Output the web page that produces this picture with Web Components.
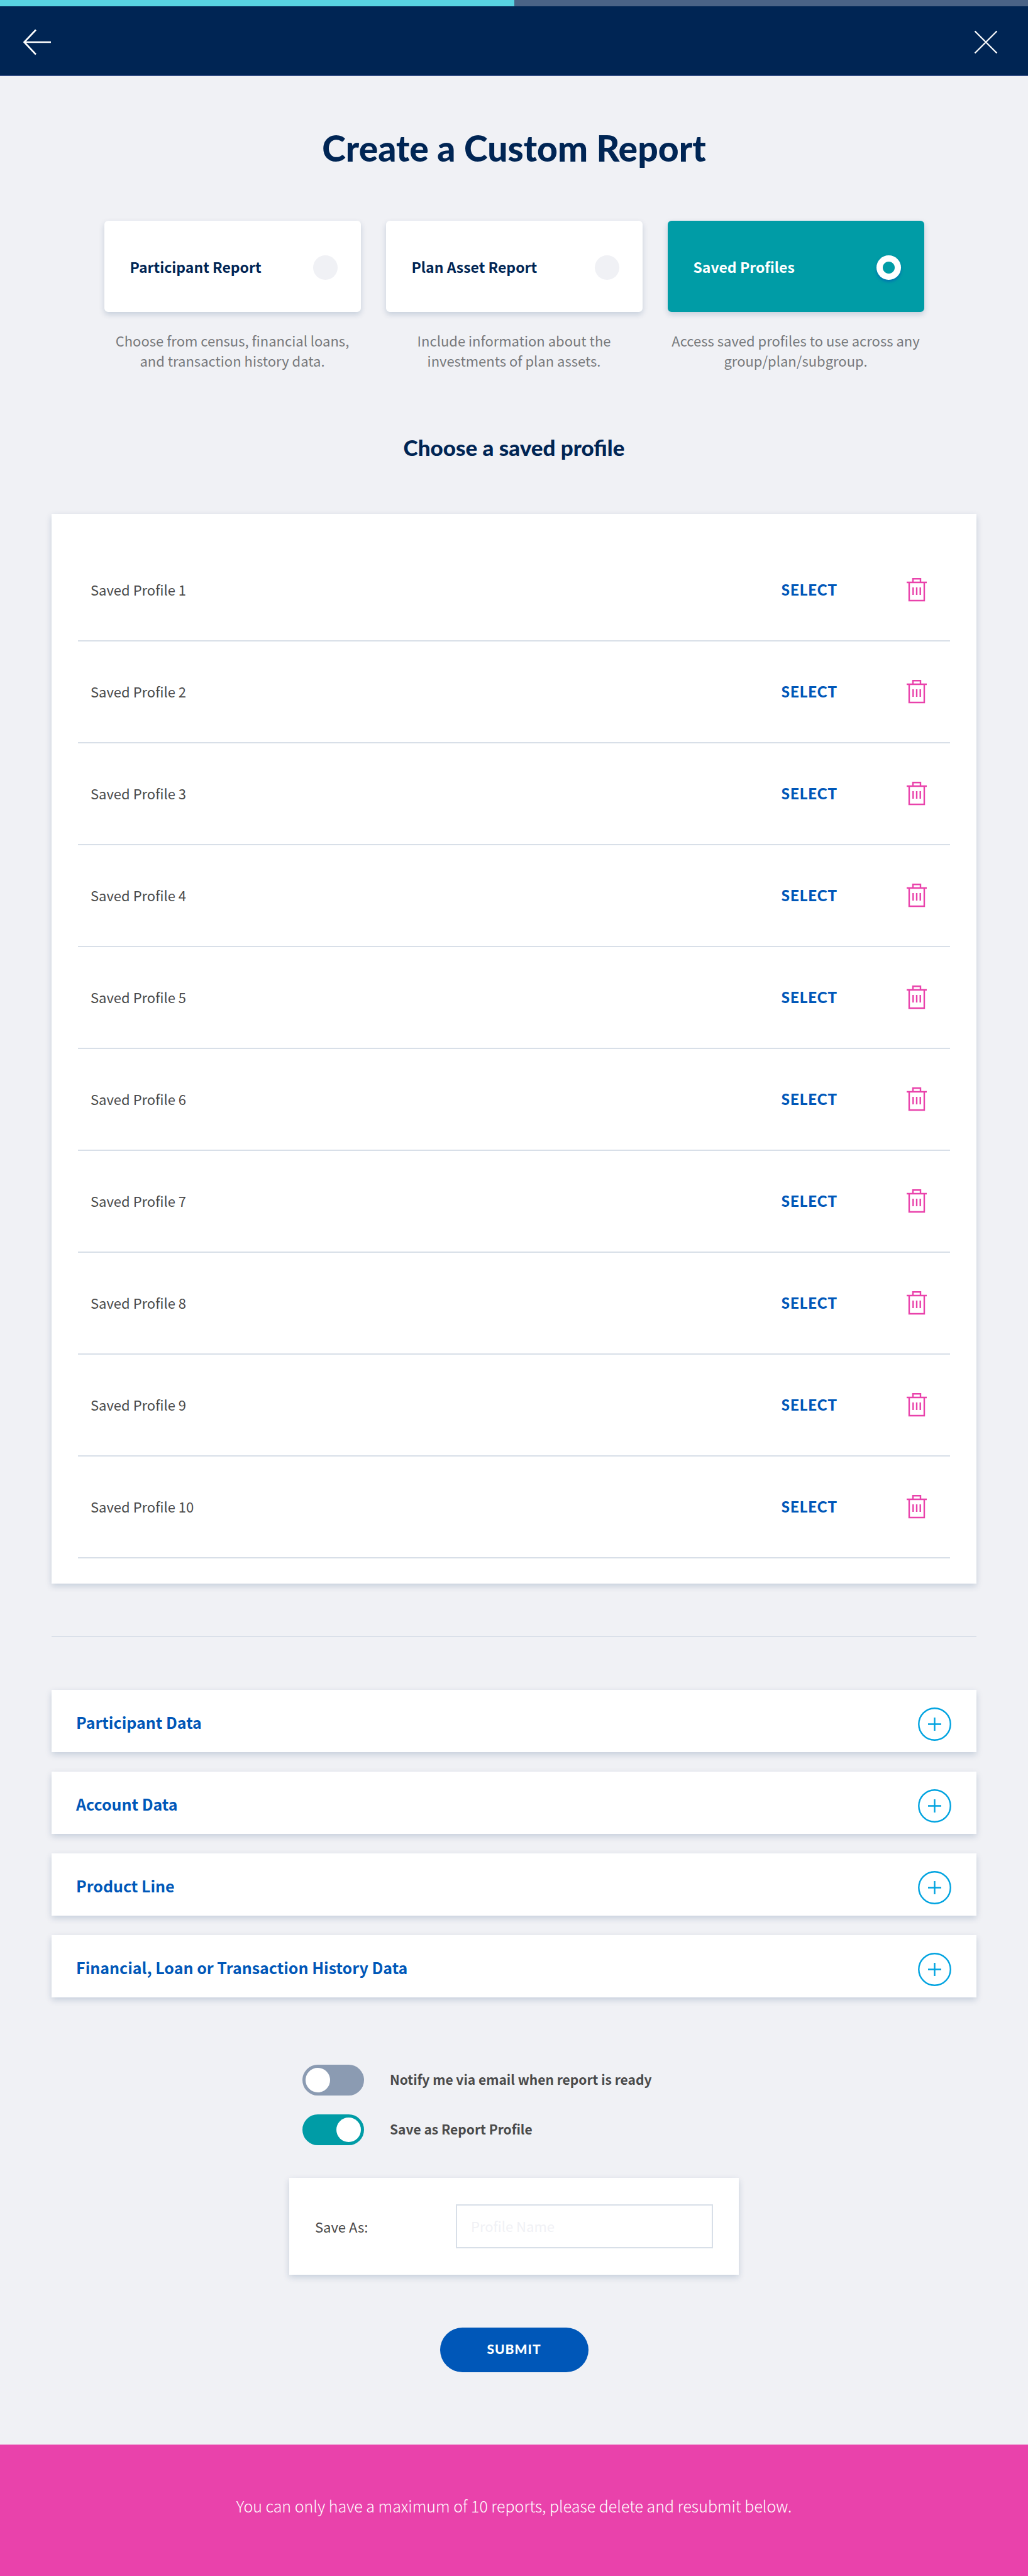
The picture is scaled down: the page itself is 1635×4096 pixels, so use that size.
<!DOCTYPE html>
<html lang="en">
<head>
<meta charset="utf-8">
<title>Create a Custom Report</title>
<style>
  :root {
    --navy: #002554;
    --blue: #0057b8;
    --sky: #00a3e0;
    --teal: #009ca6;
    --pink: #e942ab;
    --ground: #f0f1f5;
    --rule: #d8dfe8;
    --ink: #4a4a4a;
    --muted: #77797c;
    --shadow: 0 4px 10px rgba(0, 48, 98, .18);
    --body: "Noto Sans CJK SC", "Noto Sans", sans-serif;
    --display: Lato, "Liberation Sans", sans-serif;
  }
  body { margin: 0; background: var(--ground); color: var(--ink); font-family: var(--body); font-size: 22px; }
</style>
</head>
<body>
<report-page></report-page>

<script>
const define = (name, html, setup) => {
  const template = document.createElement('template');
  template.innerHTML = html;
  customElements.define(name, class extends HTMLElement {
    constructor() {
      super();
      this.attachShadow({ mode: 'open' }).append(template.content.cloneNode(true));
    }
    connectedCallback() { if (setup) setup(this, this.shadowRoot); }
  });
};

define('top-bar', `
<style>
  :host { display: block; background: var(--navy); }
  progress { display: block; width: 100%; height: 10px; border: 0; appearance: none; background: #4a6386; }
  progress::-webkit-progress-bar { background: #4a6386; }
  progress::-webkit-progress-value { background: #58d3e2; }
  nav { display: flex; justify-content: space-between; align-items: center; height: 111px; padding: 5px 48px 0 36px; border-bottom: 2px solid #304a80; box-sizing: border-box; }
  button { display: block; padding: 0; border: 0; background: none; cursor: pointer; }
  svg { display: block; fill: none; stroke: #fff; }
</style>
<progress value="1" max="2" aria-label="Progress"></progress>
<nav>
  <button aria-label="Back"><svg width="46" height="42" viewBox="0 0 46 42" stroke-width="2.6"><path d="M21 1.5 2.5 21 21 40.5M2.5 21H45"/></svg></button>
  <button aria-label="Close"><svg width="38" height="38" viewBox="0 0 38 38" stroke-width="2.2"><path d="M1.5 1.5 36.5 36.5M36.5 1.5 1.5 36.5"/></svg></button>
</nav>`);

define('report-option', `
<style>
  :host { display: block; flex: 1; }
  label { display: flex; align-items: center; justify-content: space-between; height: 145px; padding: 0 37px 0 41px; box-sizing: border-box; border-radius: 6px; background: #fff; color: var(--navy); box-shadow: var(--shadow); font-size: 23px; font-weight: 600; cursor: pointer; }
  label:has(:checked) { background: var(--teal); color: #fff; }
  input { appearance: none; width: 39px; height: 39px; margin: 4px 0 0; border-radius: 50%; background: var(--ground); }
  input:checked { background: radial-gradient(circle, var(--teal) 9px, #fff 10px); box-shadow: 0 3px 4px rgba(0, 87, 184, .6); }
  p { margin: 29px 0 0; text-align: center; color: var(--muted); line-height: 32px; }
</style>
<label><span></span><input type="radio" name="report"></label>
<p><slot></slot></p>`, (el, root) => {
  const radio = root.querySelector('input');
  root.querySelector('span').textContent = el.getAttribute('label');
  radio.checked = el.hasAttribute('checked');
  el.uncheck = () => { radio.checked = false; };
  radio.addEventListener('change', () => {
    for (const other of el.parentNode.children) if (other !== el) other.uncheck();
  });
});

define('profile-row', `
<style>
  :host { display: flex; align-items: center; height: 162px; padding: 0 37px 0 20px; box-sizing: border-box; border-bottom: 2px solid var(--rule); }
  span { flex: 1; padding-bottom: 3px; }
  button { padding: 0; border: 0; background: none; cursor: pointer; }
  .select { margin-right: 110px; color: var(--blue); font: 900 24px/32px var(--display); letter-spacing: 1px; }
  svg { display: block; fill: none; stroke: var(--pink); stroke-width: 2.4; }
</style>
<span><slot></slot></span>
<button class="select">SELECT</button>
<button class="delete" aria-label="Delete"><svg width="32" height="38" viewBox="0 0 32 38"><path d="M0 7H32M10 7V1.2H22V7M4 7V36H28V7M10.3 15V27M16 15V27M21.7 15V27"/></svg></button>`);

define('profile-list', `
<style>
  :host { display: block; padding: 41px 42px 40px; background: #fff; box-shadow: var(--shadow); }
</style>
<slot></slot>`);

define('data-section', `
<style>
  :host { display: block; background: #fff; box-shadow: var(--shadow); }
  button { display: flex; align-items: center; justify-content: space-between; width: 100%; height: 99px; padding: 2px 40px 0 39px; border: 0; background: none; color: var(--blue); font: 600 25px/32px var(--body); text-align: left; cursor: pointer; }
  svg { display: block; fill: none; stroke: var(--sky); stroke-width: 2.4; margin-top: 8px; }
</style>
<button aria-expanded="false"><slot></slot><svg width="53" height="53" viewBox="0 0 53 53"><circle cx="26.5" cy="26.5" r="25.2"/><path d="M16 26.5H37M26.5 16V37"/></svg></button>`);

define('toggle-switch', `
<style>
  :host { display: block; }
  label { display: flex; align-items: center; gap: 41px; color: var(--ink); font-size: 21px; font-weight: 600; cursor: pointer; }
  input { appearance: none; display: flex; width: 98px; height: 49px; margin: 0; padding: 5px; box-sizing: border-box; border-radius: 25px; background: #8b9bb2; }
  input::before { content: ""; width: 39px; height: 39px; border-radius: 50%; background: #fff; }
  input:checked { justify-content: flex-end; background: var(--teal); }
  span { padding-bottom: 3px; }
</style>
<label><input type="checkbox" role="switch"><span><slot></slot></span></label>`, (el, root) => {
  root.querySelector('input').checked = el.hasAttribute('checked');
});

define('save-as', `
<style>
  :host { display: flex; align-items: center; justify-content: space-between; padding: 42px 41px; background: #fff; box-shadow: var(--shadow); }
  input { width: 409px; height: 70px; padding: 0 22px 2px; box-sizing: border-box; border: 2px solid var(--rule); border-radius: 0; background: #fff; color: var(--ink); font: 22px/32px var(--body); }
  input::placeholder { color: #f0f1f5; opacity: 1; }
</style>
<label for="name">Save As:</label>
<input id="name" type="text" placeholder="Profile Name">`);

define('alert-bar', `
<style>
  :host { display: block; padding: 79px 40px 94px; background: var(--pink); color: #fff; font-size: 25px; font-weight: 300; line-height: 36px; text-align: center; }
</style>
<slot></slot>`);

define('report-page', `
<style>
  :host { display: block; }
  main { padding: 82px 82px 115px; }
  h1, h2 { margin: 0; color: var(--navy); font-family: var(--display); font-weight: 900; text-align: center; }
  h1 { font-size: 57px; line-height: 64px; }
  h2 { margin: 102px 0 86px; font-size: 35px; line-height: 40px; }
  .options { display: flex; gap: 40px; max-width: 1304px; margin: 84px auto 0; }
  hr { height: 1px; margin: 84px 0; border: 0; background: #cdd7e2; }
  .sections { display: grid; gap: 31px; }
  form { max-width: 715px; margin: 107px auto 0; }
  .toggles { display: grid; gap: 30px; padding: 0 21px; margin-bottom: 52px; }
  .submit { display: block; width: 236px; height: 71px; margin: 84px auto 0; padding: 0 0 3px; border: 0; border-radius: 36px; background: var(--blue); color: #fff; font: 900 21px/32px var(--display); letter-spacing: 1px; cursor: pointer; }
</style>
<top-bar></top-bar>
<main>
  <h1>Create a Custom Report</h1>
  <div class="options">
    <report-option label="Participant Report">Choose from census, financial loans,<br>and transaction history data.</report-option>
    <report-option label="Plan Asset Report">Include information about the<br>investments of plan assets.</report-option>
    <report-option label="Saved Profiles" checked>Access saved profiles to use across any<br>group/plan/subgroup.</report-option>
  </div>
  <h2>Choose a saved profile</h2>
  <profile-list>
    <profile-row>Saved Profile 1</profile-row>
    <profile-row>Saved Profile 2</profile-row>
    <profile-row>Saved Profile 3</profile-row>
    <profile-row>Saved Profile 4</profile-row>
    <profile-row>Saved Profile 5</profile-row>
    <profile-row>Saved Profile 6</profile-row>
    <profile-row>Saved Profile 7</profile-row>
    <profile-row>Saved Profile 8</profile-row>
    <profile-row>Saved Profile 9</profile-row>
    <profile-row>Saved Profile 10</profile-row>
  </profile-list>
  <hr>
  <div class="sections">
    <data-section>Participant Data</data-section>
    <data-section>Account Data</data-section>
    <data-section>Product Line</data-section>
    <data-section>Financial, Loan or Transaction History Data</data-section>
  </div>
  <form>
    <div class="toggles">
      <toggle-switch>Notify me via email when report is ready</toggle-switch>
      <toggle-switch checked>Save as Report Profile</toggle-switch>
    </div>
    <save-as></save-as>
    <button class="submit" type="button">SUBMIT</button>
  </form>
</main>
<alert-bar>You can only have a maximum of 10 reports, please delete and resubmit below.</alert-bar>`);
</script>
</body>
</html>
